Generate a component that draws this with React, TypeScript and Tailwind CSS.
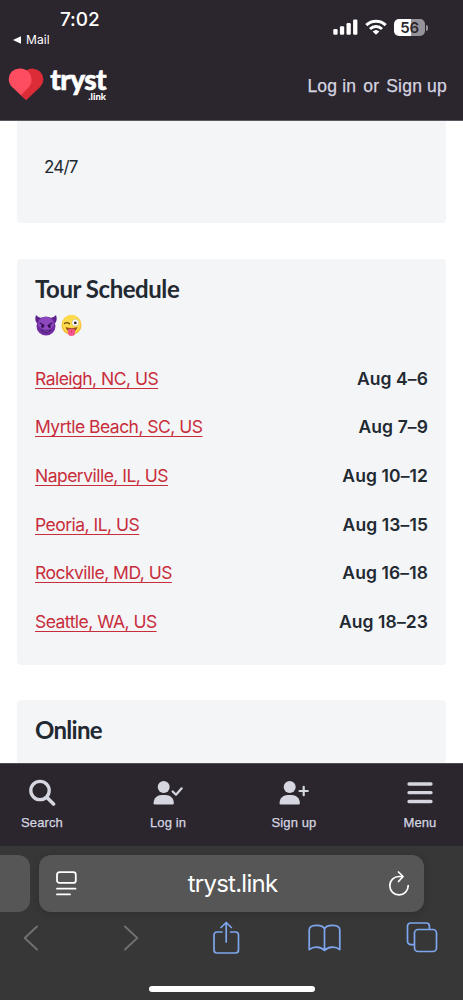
import React from "react";

const stops = [
  { city: "Raleigh, NC, US", dates: "Aug 4–6" },
  { city: "Myrtle Beach, SC, US", dates: "Aug 7–9" },
  { city: "Naperville, IL, US", dates: "Aug 10–12" },
  { city: "Peoria, IL, US", dates: "Aug 13–15" },
  { city: "Rockville, MD, US", dates: "Aug 16–18" },
  { city: "Seattle, WA, US", dates: "Aug 18–23" },
];

function StatusBar() {
  return (
    <div className="flex h-[50px] shrink-0 justify-between text-white">
      <div className="flex flex-col pl-[13px] pt-[8px] font-['Inter',sans-serif]">
        <span className="pl-[47px] text-[19px] font-medium leading-[24px] tracking-[-0.1px]">7:02</span>
        <span className="flex items-center gap-[5px] text-[12px] leading-[16px] tracking-[0.1px]">
          <svg width="8" height="8" viewBox="0 0 8 8" fill="currentColor"><path d="M0 4 8 .3v7.4Z" /></svg>
          Mail
        </span>
      </div>
      <div className="flex items-start gap-[7px] pr-[35px] pt-[19px]">
        <svg width="25" height="16" viewBox="0 0 25 16" fill="currentColor">
          <rect x="0.3" y="10" width="4.3" height="5.8" rx="1.2" />
          <rect x="6.9" y="7.3" width="4.3" height="8.5" rx="1.2" />
          <rect x="13.5" y="4" width="4.3" height="11.8" rx="1.2" />
          <rect x="20.1" y="0.6" width="4.3" height="15.2" rx="1.2" />
        </svg>
        <svg width="22" height="16" viewBox="0 0 22 16" fill="none" stroke="currentColor" strokeWidth="3">
          <path d="M1.3 6.2a14 14 0 0 1 19.4 0" />
          <path d="M5 10a8.6 8.6 0 0 1 12 0" />
          <path d="M11 15.8 7.6 12.6a5 5 0 0 1 6.8 0Z" fill="currentColor" stroke="none" />
        </svg>
        <div className="flex items-center gap-px">
          <div className="flex h-[17px] w-[31px] items-center justify-center rounded-[5px] bg-linear-to-r from-white from-56% to-[#96929a] to-56% font-['Inter',sans-serif] text-[15px] font-semibold leading-none tracking-[-0.3px] text-[#2c262d]">
            56
          </div>
          <div className="h-[6px] w-[2px] rounded-r-full bg-[#96929a]" />
        </div>
      </div>
    </div>
  );
}

function Logo() {
  return (
    <div className="flex items-start">
      <svg width="36" height="33" viewBox="0 0 36 33">
        <path d="M17.5 32.2 3.6 18.8A10.7 10.7 0 0 1 3.8 3.8 10.7 10.7 0 0 1 17.5 2.8 10.7 10.7 0 0 1 31.6 3.8 10.7 10.7 0 0 1 31.8 18.8Z" transform="translate(0.6 0)" fill="#dc2c38" />
        <path d="M18.100 32.200 3.900 18.800A10.800 10.800 0 0 1 3.800 3.600 12.200 12.200 0 0 1 20.700 4.100 11.300 11.300 0 0 1 20.200 19.700L12.800 27.400Z" fill="#fe4d60" />
      </svg>
      <div className="flex w-[62px] flex-col items-end text-white">
        <span className="font-['Lato',sans-serif] text-[28px] font-black leading-[23px] tracking-[-0.6px] [-webkit-text-stroke:0.6px_white]">tryst</span>
        <span className="font-['Lato',sans-serif] text-[9.5px] font-black leading-[12px]">.link</span>
      </div>
    </div>
  );
}

function Devil() {
  return (
    <svg width="22" height="22" viewBox="0 0 22 22">
      <path d="M1 1C-.3 5 .2 8 3 10L8 4C5 4 2.700 3 1 1ZM21 1c1.300 4 .8 7-2 9l-5-6c3 0 5.300-1 7-3Z" fill="#5d218c" />
      <circle cx="11" cy="12" r="9.500" fill="#6f2b9f" />
      <ellipse cx="11" cy="9.500" rx="8" ry="6.500" fill="#8e48bd" />
      <path d="m5 9 4 2.400M17 9l-4 2.400" stroke="#35105b" strokeWidth="1.200" strokeLinecap="round" />
      <ellipse cx="7.600" cy="12.200" rx="1.300" ry="1.700" fill="#32104f" />
      <ellipse cx="14.400" cy="12.200" rx="1.300" ry="1.700" fill="#32104f" />
      <path d="M6 15.300q5 3 10 0-1.300 3.400-5 3.400t-5-3.400Z" fill="#3f1267" />
      <path d="M7.500 16.500q3.500 1.400 7 0-1 1.100-3.500 1.100t-3.500-1.100Z" fill="#e4d3f5" />
    </svg>
  );
}

function Wink() {
  return (
    <svg width="21" height="22" viewBox="0 0 21 22">
      <circle cx="10.500" cy="11" r="10" fill="#f3b72c" />
      <circle cx="10.500" cy="10.300" r="9.200" fill="#fddc4b" />
      <path d="M3.500 9.600Q6 7.500 8.500 9.800" fill="none" stroke="#71460f" strokeWidth="1.300" strokeLinecap="round" />
      <circle cx="14.300" cy="8.700" r="3.400" fill="#fff" stroke="#b2a67d" strokeWidth=".5" />
      <circle cx="14.300" cy="8.900" r="1.400" fill="#3b2c22" />
      <path d="M4.500 13q6 1.800 12 0-1 5-6 5t-6-5Z" fill="#9c541c" />
      <path d="M7 15.500q3.500-1.500 7 0v3.200a3.500 3.300 0 0 1-7 0Z" fill="#f4568a" />
      <path d="M10.500 16v3" stroke="#d2346a" strokeWidth=".7" />
    </svg>
  );
}

function NavItem({ label, children }: { label: string; children: React.ReactNode }) {
  return (
    <div className="flex w-[84px] flex-col items-center">
      <div className="flex h-[49px] items-end justify-center">{children}</div>
      <span className="font-['Liberation_Sans',sans-serif] text-[13px] leading-[20px] tracking-[0.1px] [-webkit-text-stroke:0.25px_#d5d6e0]">{label}</span>
    </div>
  );
}

function Person() {
  return (
    <>
      <circle cx="10.700" cy="7" r="6" fill="currentColor" stroke="none" />
      <path d="M.6 23.200c0-5 3.700-8.100 8.200-8.100h3.800c4.500 0 8.200 3.100 8.200 8.100q0 1.300-1.300 1.300H1.900Q.6 24.500.6 23.200Z" fill="currentColor" stroke="none" />
    </>
  );
}

function BottomNav() {
  return (
    <nav className="flex h-[83px] shrink-0 justify-between border-t border-[#514c55] bg-[#2b252d] pr-px text-[#d5d6e0]">
      <NavItem label="Search">
        <svg className="mb-[6px]" width="27" height="28" viewBox="0 0 27 28" fill="none" stroke="currentColor">
          <circle cx="11" cy="11.500" r="9.200" strokeWidth="3.300" />
          <path d="m18 18.500 6.500 6.500" strokeWidth="3.600" strokeLinecap="round" />
        </svg>
      </NavItem>
      <NavItem label="Log in">
        <svg className="mb-[7px]" width="30" height="26" viewBox="0 0 30 26" fill="none" stroke="currentColor" strokeWidth="2.200" strokeLinecap="round" strokeLinejoin="round">
          <Person />
          <path d="m19.700 11.500 3.300 3.200 5.700-6.400" />
        </svg>
      </NavItem>
      <NavItem label="Sign up">
        <svg className="mb-[7px]" width="30" height="26" viewBox="0 0 30 26" fill="none" stroke="currentColor" strokeWidth="2.200" strokeLinecap="round">
          <Person />
          <path d="M20.500 11h8.300M24.700 6.800v8.400" />
        </svg>
      </NavItem>
      <NavItem label="Menu">
        <svg className="mb-[8px]" width="26" height="24" viewBox="0 0 26 24" stroke="currentColor" strokeWidth="3.300" strokeLinecap="round">
          <path d="M2 3h22M2 11.700h22M2 20.500h22" />
        </svg>
      </NavItem>
    </nav>
  );
}

function BrowserChrome() {
  return (
    <footer className="flex h-[154px] shrink-0 flex-col overflow-hidden bg-[#373738]">
      <div className="flex gap-[9px] pt-[9px]">
        <div className="h-[57px] w-[30px] shrink-0 rounded-r-[12px] bg-[#565656]" />
        <div className="flex h-[57px] w-[385px] shrink-0 items-center justify-between rounded-[12px] bg-[#565656] pl-[17px] pr-[14px] text-white shadow-[0_2px_8px_rgba(0,0,0,0.15)]">
          <svg width="21" height="25" viewBox="0 0 21 25" fill="none" stroke="currentColor" strokeWidth="1.800" strokeLinecap="round">
            <rect x="1" y="1.200" width="18.800" height="10.700" rx="2.500" />
            <path d="M1 17.700h18.500M1 23.400h13" />
          </svg>
          <span className="font-['Inter',sans-serif] text-[24px] leading-[30px] tracking-[-0.75px]">tryst.link</span>
          <svg width="22" height="26" viewBox="0 0 22 26" fill="none" stroke="currentColor" strokeWidth="1.700" strokeLinecap="round" strokeLinejoin="round">
            <path d="M14.800 5.500H11A9.200 9.200 0 1 0 20.200 14.500M10.500 1l4.600 4.500-4.600 5" />
          </svg>
        </div>
      </div>
      <div className="flex h-[51px] items-center justify-between pl-[23px] pr-[25px] text-[#7da6ed]">
        <svg className="text-[#707071]" width="16" height="26" viewBox="0 0 16 26" fill="none" stroke="currentColor" strokeWidth="1.900" strokeLinecap="round" strokeLinejoin="round">
          <path d="M14 1.500 1.700 13 14 24.500" />
        </svg>
        <svg className="ml-[18px] text-[#707071]" width="16" height="26" viewBox="0 0 16 26" fill="none" stroke="currentColor" strokeWidth="1.900" strokeLinecap="round" strokeLinejoin="round">
          <path d="M2 1.500 14.300 13 2 24.500" />
        </svg>
        <svg className="ml-[9px]" width="27" height="33" viewBox="0 0 27 33" fill="none" stroke="currentColor" strokeWidth="1.700" strokeLinecap="round" strokeLinejoin="round">
          <path d="M9 11H4a3 3 0 0 0-3 3v15a3 3 0 0 0 3 3h18.500a3 3 0 0 0 3-3V14a3 3 0 0 0-3-3h-5M13.200 21V1.500M8 6.500l5.200-5 5.200 5" />
        </svg>
        <svg className="ml-[2px]" width="33" height="28" viewBox="0 0 33 28" fill="none" stroke="currentColor" strokeWidth="1.700" strokeLinejoin="round">
          <path d="M16.500 26.500c-4-4-11-4.500-15.300-.8V6C1.200-.2 14.500.1 16.500 5v21.500c4-4 11-4.500 15.300-.8V6C31.800-.2 18.500.1 16.500 5" />
        </svg>
        <svg width="32" height="31" viewBox="0 0 32 31" fill="none" stroke="currentColor" strokeWidth="1.700">
          <path d="M8.500 22.700H5a3.500 3.500 0 0 1-3.500-3.500v-15A3.200 3.200 0 0 1 4.700 1h15.500a3.200 3.200 0 0 1 3.200 3.200v3.300" />
          <rect x="8.500" y="7.500" width="22" height="22" rx="3.500" />
        </svg>
      </div>
      <div className="mt-[23px] flex justify-center">
        <div className="h-[6px] w-[166px] rounded-full bg-white" />
      </div>
    </footer>
  );
}

export default function App() {
  return (
    <div className="flex h-[1000px] w-[463px] flex-col overflow-hidden bg-white font-['Inter',sans-serif] text-[#222931]">
      <header className="flex h-[121px] shrink-0 flex-col border-b border-[#5c5861] bg-[#2b252d]">
        <StatusBar />
        <div className="flex items-start justify-between pl-[8px] pr-[16px] pt-[18px]">
          <Logo />
          <div className="flex gap-[7px] pt-[6px] font-['Liberation_Sans',sans-serif] text-[17.5px] leading-[24px] tracking-[0.2px] text-[#d5d6e0] [-webkit-text-stroke:0.25px_#d5d6e0]">
            <span>Log in</span>
            <span>or</span>
            <span>Sign up</span>
          </div>
        </div>
      </header>
      <main className="flex min-h-0 flex-1 flex-col overflow-hidden px-[17px]">
        <section className="h-[102px] shrink-0 rounded-b-[4px] bg-[#f4f5f7] pl-[27px] pt-[34px] text-[17px] leading-[25px] tracking-[-0.8px]">24/7</section>
        <section className="mt-[36px] h-[406px] shrink-0 rounded-[4px] bg-[#f4f5f7] px-[18px] pt-[14px]">
          <h2 className="font-['Lato',sans-serif] text-[24px] font-bold leading-[32px] tracking-[-0.45px]">Tour Schedule</h2>
          <div className="mt-[9px] flex h-[22px] gap-[4px]">
            <Devil />
            <Wink />
          </div>
          <ul className="mt-[18.5px]">
            {stops.map((s) => (
              <li key={s.city} className="flex h-[48.6px] items-center justify-between text-[17.5px] leading-[26px]">
                <a className="tracking-[-0.52px] text-[#c82d3c] underline decoration-1 underline-offset-[3px] [text-decoration-skip-ink:none]">{s.city}</a>
                <span className="font-semibold tracking-[0.1px]">{s.dates}</span>
              </li>
            ))}
          </ul>
        </section>
        <section className="mt-[35px] h-[80px] shrink-0 rounded-t-[4px] bg-[#f4f5f7] px-[18px] pt-[14px]">
          <h2 className="font-['Lato',sans-serif] text-[24px] font-bold leading-[32px] tracking-[-0.7px]">Online</h2>
        </section>
      </main>
      <BottomNav />
      <BrowserChrome />
    </div>
  );
}
